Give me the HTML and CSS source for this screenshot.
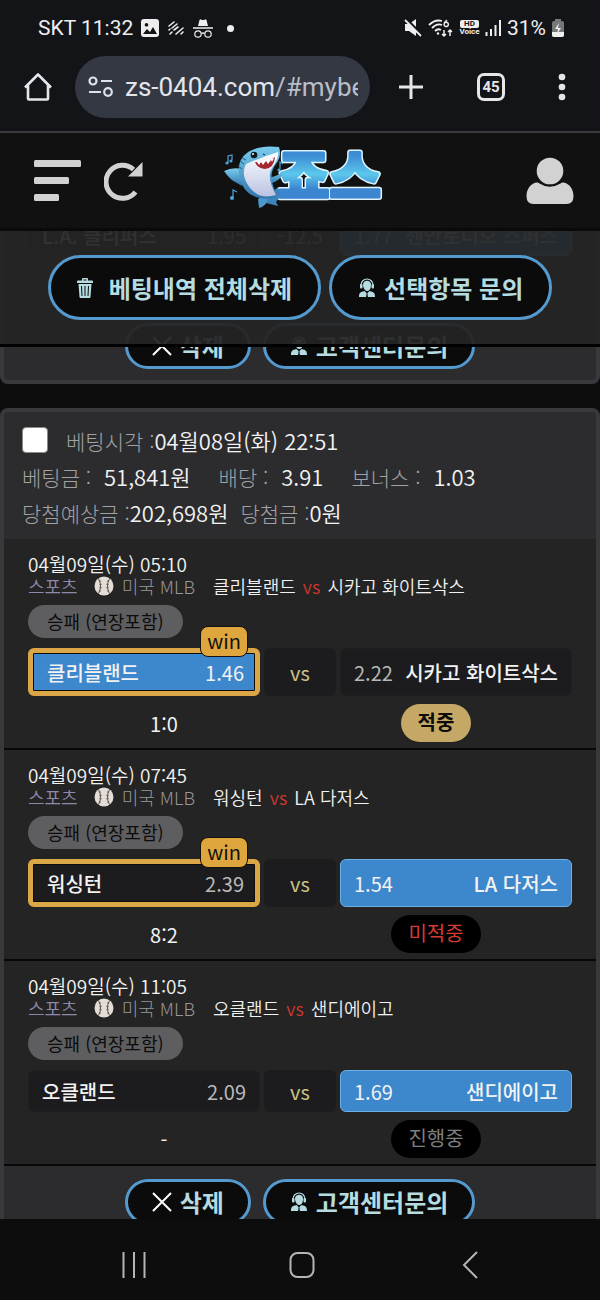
FILE: index.html
```
<!DOCTYPE html>
<html lang="ko">
<head>
    <meta charset="UTF-8">
    <meta name="viewport" content="width=device-width, initial-scale=1.0">
    <title>죠스 - 베팅내역</title>
    <link rel="stylesheet" href="styles.css">
</head>
<body>
    <!-- shared icons -->
    <svg class="sprite" aria-hidden="true">
        <symbol id="ball" viewBox="0 0 20 20">
            <circle cx="10" cy="10" r="9.5" fill="#e4ddd6"/>
            <path d="M4.500 2.500Q8.500 10 4.500 17.500M15.500 2.500Q11.500 10 15.500 17.500" fill="none" stroke="#55504c" stroke-width="1"/>
            <path d="M5 5.500l2-.7M5.500 8.500l2.300-.3M5.500 11.500l2.300.3M5 14.500l2 .7M15 5.500l-2-.7M14.500 8.500l-2.300-.3M14.500 11.500l-2.300.3M15 14.500l-2 .7" stroke="#55504c" stroke-width=".8"/>
        </symbol>
        <symbol id="agent" viewBox="0 0 18 20">
            <path d="M3 8V7a6 6 0 0 1 12 0v1" fill="none" stroke="currentColor" stroke-width="1.200"/>
            <rect x="2" y="6" width="2.500" height="4.500" rx="1" fill="currentColor"/>
            <rect x="13.500" y="6" width="2.500" height="4.500" rx="1" fill="currentColor"/>
            <path d="M5 6.500C5 1.500 13 1.500 13 6.500S11 13 9 13 5 10 5 6.500z" fill="currentColor"/>
            <path d="M1 19c0-4 1-5 5.500-6L9 15.500l2.500-2.500C16 14 17 15 17 19z" fill="currentColor"/>
            <path d="M8.200 15.500h1.600l-.3 1.200.5 2.300H8l.5-2.300z" fill="#0b0b0b"/>
        </symbol>
        <symbol id="cross" viewBox="0 0 20 20">
            <path d="M1 1l18 18M19 1L1 19" fill="none" stroke="#fff" stroke-width="2"/>
        </symbol>
    </svg>

    <div class="status-bar">
        <div class="status-left">
            <span class="status-text">SKT 11:32</span>
            <svg width="18" height="18" viewBox="0 0 18 18"><path fill-rule="evenodd" d="M3 0h12a3 3 0 0 1 3 3v12a3 3 0 0 1-3 3H3a3 3 0 0 1-3-3V3a3 3 0 0 1 3-3zM2 15l4-5 3 3 3-5 4 7zM5.500 4a1.800 1.800 0 1 0 .01 0z" fill="#eee"/></svg>
            <svg width="18" height="16" viewBox="0 0 18 16" stroke="#eee" stroke-width="1.600" fill="none" stroke-linecap="round"><path d="M2 6l5-4M2 10l1-1M5 8l5-4M3 14l2-2M7 10l4-3M9 14l7-6M14 14l2-2"/></svg>
            <svg width="20" height="19" viewBox="0 0 20 19"><path d="M5 7l1.500-6Q7 0 8 .5q2 1 4 0 1-.5 1.500.5L15 7z" fill="#eee"/><path d="M0 9h20M8.500 14.500q1.500-1 3 0" stroke="#eee" stroke-width="1.300" fill="none"/><circle cx="5" cy="15" r="3.200" fill="none" stroke="#eee" stroke-width="1.200"/><circle cx="15" cy="15" r="3.200" fill="none" stroke="#eee" stroke-width="1.200"/></svg>
            <span class="dot"></span>
        </div>
        <div class="status-right">
            <svg width="18" height="18" viewBox="0 0 18 18"><path d="M1 5h4l7-5v17l-7-5H1z" fill="#eee"/><path d="M2 0l17 17" stroke="#131418" stroke-width="3"/><path d="M1 1l16 16" stroke="#eee" stroke-width="1.800"/></svg>
            <svg width="26" height="19" viewBox="0 0 26 19" fill="none" stroke="#eee" stroke-width="1.800"><path d="M1 6Q7 0 14 2M4 9q5-5 10-3M7 12q3-3 6-1"/><circle cx="10" cy="14.500" r="1.200" fill="#eee" stroke="none"/><path d="M19 1q-3 2-3 4.500a2.200 2.200 0 1 0 .5-1.500" stroke-width="1.500"/><path d="M16 11v6m-2-2l2 2 2-2M22 17v-6m-2 2l2-2 2 2" stroke-width="1.500"/></svg>
            <span class="volte"><b>HD</b><i>Voice</i></span>
            <svg width="16" height="16" viewBox="0 0 16 16" stroke="#eee" stroke-width="2"><path d="M1.500 16v-4M6 16V9M10.500 16V5M15 16V0"/></svg>
            <span class="status-text">31%</span>
            <svg width="12" height="18" viewBox="0 0 12 18"><path d="M3 0h6v2h1a2 2 0 0 1 2 2v12a2 2 0 0 1-2 2H2a2 2 0 0 1-2-2V4a2 2 0 0 1 2-2h1z" fill="#77777a"/><path d="M0 13h12v3a2 2 0 0 1-2 2H2a2 2 0 0 1-2-2z" fill="#eee"/><path d="M7 4L3 10h3l-1 5 4-6H6z" fill="#eee"/></svg>
        </div>
    </div>

    <div class="browser-bar">
        <button class="icon-btn" aria-label="홈"><svg width="30" height="30" viewBox="0 0 30 30" fill="none" stroke="#e6e6ea" stroke-width="2.600" stroke-linejoin="round"><path d="M2 15.500L15 2.500l13 13M5 13v13.500q0 1 1 1h18q1 0 1-1V13"/></svg></button>
        <div class="address">
            <svg width="25" height="22" viewBox="0 0 25 22" fill="none" stroke="#dfe1e8" stroke-width="2.200"><circle cx="5" cy="5" r="3.500"/><path d="M13 5h11M1 16h12"/><circle cx="20" cy="16" r="3.800"/></svg>
            <span class="url">zs-0404.com<span>/#mybet</span></span>
        </div>
        <div class="browser-actions">
            <button class="icon-btn" aria-label="새 탭"><svg width="26" height="26" viewBox="0 0 26 26" stroke="#e6e6ea" stroke-width="3"><path d="M13 1v24M1 13h24"/></svg></button>
            <button class="icon-btn tabs" aria-label="탭 45개">45</button>
            <button class="icon-btn" aria-label="메뉴"><svg width="8" height="28" viewBox="0 0 8 28" fill="#e6e6ea"><circle cx="4" cy="4" r="3.300"/><circle cx="4" cy="14" r="3.300"/><circle cx="4" cy="24" r="3.300"/></svg></button>
        </div>
    </div>

    <header class="site-header">
        <div class="header-left">
            <button class="icon-btn" aria-label="전체 메뉴"><svg width="47" height="42" viewBox="0 0 47 42" fill="#d2d2d2"><rect width="47" height="7" rx="1.500"/><rect y="17" width="35" height="7" rx="1.500"/><rect y="34" width="25" height="7" rx="1.500"/></svg></button>
            <button class="icon-btn" aria-label="새로고침"><svg width="40" height="40" viewBox="0 0 40 40"><path d="M29.500 8.500A16.500 16.500 0 1 0 31.500 31" fill="none" stroke="#d2d2d2" stroke-width="5"/><path d="M38.500 1v14.500H24z" fill="#d2d2d2"/></svg></button>
        </div>
        <a href="#" class="logo" aria-label="죠스">
            <svg width="160" height="66" viewBox="0 0 160 66">
                <defs>
                    <linearGradient id="word" x1="0" y1="0" x2="0" y2="1">
                        <stop offset="0" stop-color="#2f74c4"/>
                        <stop offset=".3" stop-color="#3f8fd6"/>
                        <stop offset=".52" stop-color="#5cc8ec"/>
                        <stop offset=".7" stop-color="#3c86d0"/>
                        <stop offset="1" stop-color="#3f83d2"/>
                    </linearGradient>
                    <linearGradient id="skin" x1="0" y1="0" x2="0" y2="1">
                        <stop offset="0" stop-color="#79cdee"/>
                        <stop offset="1" stop-color="#2f76ad"/>
                    </linearGradient>
                    <linearGradient id="belly" x1="0" y1="0" x2="0" y2="1">
                        <stop offset="0" stop-color="#fff"/>
                        <stop offset="1" stop-color="#b9c2e2"/>
                    </linearGradient>
                </defs>
                <text x="54" y="52" class="word-edge">죠스</text>
                <text x="54" y="52" class="word-fill" fill="url(#word)" stroke="url(#word)">죠스</text>
                <!-- shark -->
                <path d="M0 26q8-4 18-2l4 12q-3 1-4 5l-5-3q-7-3-13-12z" fill="url(#skin)"/>
                <path d="M43 32q10 1 17-7-2 11-15 14z" fill="url(#skin)"/>
                <path d="M45 50l9-8q4 10-2 15l2 4-12-3-7 5-1-9z" fill="#3c83bb"/>
                <path d="M15 23C15 8 32-1 55 2c2 6 1 12-3 17-7 9-5 18 0 29l-2 4C33 57 20 48 17 36q-3-7-2-13z" fill="url(#skin)"/>
                <path d="M22 19Q38 12 54 7q1 7-6 16-6 9 4 27-16 5-26-7-10-13-4-24z" fill="url(#belly)"/>
                <path d="M31 17q11 1 20-5-1 11-10 12-8-1-10-7z" fill="#a32631"/>
                <path d="M33 17l2 3 2-3 2 3 3-4 2 3 3-4 1 2 2-4z" fill="#fff"/>
                <circle cx="30" cy="10" r="3.300" fill="#101820"/><circle cx="29" cy="9" r="1" fill="#fff"/>
                <path d="M39 9l2 1" stroke="#101820"/>
                <path d="M14 21l4 3M16 16l4 3M18 13l4 2" stroke="#225a85" fill="none"/>
                <path d="M35 53q-1 6 1 10 7-3 8-9z" fill="#4b98ca"/>
                <g fill="none" stroke="#4ea3d8" stroke-width="1.200"><path d="M4 18v-7l4-1v5M9 52v-7l4 2M56 24v-7l3 2"/></g>
                <g fill="#4ea3d8"><circle cx="3" cy="18" r="1.600"/><circle cx="7" cy="16" r="1.600"/><circle cx="8" cy="53" r="2"/><circle cx="55" cy="25" r="1.600"/></g>
            </svg>
        </a>
        <button class="icon-btn header-user" aria-label="내 정보"><svg width="48" height="48" viewBox="0 0 48 48" fill="#d2d2d2"><circle cx="24" cy="14" r="13.300"/><path d="M10 25.500q2-.5 3.500 1 10 6.500 21 0 1.500-1.500 3.500-1C44 27 47.500 33 47.500 39q0 8-7 8h-33q-7 0-7-8C.5 33 4 27 10 25.500z"/></svg></button>
    </header>

    <main class="content">
        <div class="toolbar">
            <button class="pill-btn large">
                <svg width="16" height="20" viewBox="0 0 16 20" fill="currentColor"><path d="M5 2.500V1q0-1 1-1h4q1 0 1 1v1.500h4q1 0 1 1V5H0V3.500q0-1 1-1zM6.500 1.500v1h3v-1z" fill-rule="evenodd"/><path fill-rule="evenodd" d="M1.500 6h13l-1 13q0 1-1 1h-9q-1 0-1-1zM4 8l.5 10h1L5 8zM7.500 8v10h1V8zM11 8l-.5 10h1L12 8z"/></svg>
                <span class="wide-label">베팅내역 전체삭제</span>
            </button>
            <button class="pill-btn large"><svg width="18" height="20"><use href="#agent"/></svg><span>선택항목 문의</span></button>
        </div>

        <div class="bet-list">
            <section class="bet-card">
                <div class="match first">
                    <div class="odds short">
                        <div class="pick"><span class="team">L.A. 클리퍼스</span><span class="rate">1.95</span></div>
                        <div class="mid line">-12.5</div>
                        <div class="pick selected"><span class="rate">1.77</span><span class="team">센안토니오 스퍼스</span></div>
                    </div>
                </div>
                <div class="card-footer">
                    <button class="pill-btn"><svg width="20" height="20"><use href="#cross"/></svg><span>삭제</span></button>
                    <button class="pill-btn"><svg width="18" height="20"><use href="#agent"/></svg><span>고객센터문의</span></button>
                </div>
            </section>

            <section class="bet-card">
                <div class="card-head">
                    <div class="head-row">
                        <input type="checkbox" id="bet-1">
                        <label for="bet-1">베팅시각 :<b>04월08일(화) 22:51</b></label>
                    </div>
                    <div class="head-row spaced">
                        <span>베팅금 : <b>51,841원</b></span>
                        <span>배당 : <b>3.91</b></span>
                        <span>보너스 : <b>1.03</b></span>
                    </div>
                    <div class="head-row">
                        <span>당첨예상금 :<b>202,698원</b></span>
                        <span>당첨금 :<b>0원</b></span>
                    </div>
                </div>

                <div class="match">
                    <div class="date">04월09일(수) 05:10</div>
                    <div class="league"><a href="#">스포츠</a><svg width="20" height="20"><use href="#ball"/></svg><span class="league-name">미국 MLB</span><span class="teams">클리블랜드 <em>vs</em> 시카고 화이트삭스</span></div>
                    <div class="market">승패 (연장포함)</div>
                    <div class="odds">
                        <div class="pick selected win"><span class="badge">win</span><span class="team">클리블랜드</span><span class="rate">1.46</span></div>
                        <div class="mid">vs</div>
                        <div class="pick"><span class="rate">2.22</span><span class="team">시카고 화이트삭스</span></div>
                    </div>
                    <div class="result"><span>1:0</span><span class="state hit">적중</span></div>
                </div>

                <div class="match">
                    <div class="date">04월09일(수) 07:45</div>
                    <div class="league"><a href="#">스포츠</a><svg width="20" height="20"><use href="#ball"/></svg><span class="league-name">미국 MLB</span><span class="teams">워싱턴 <em>vs</em> LA 다저스</span></div>
                    <div class="market">승패 (연장포함)</div>
                    <div class="odds">
                        <div class="pick win"><span class="badge">win</span><span class="team">워싱턴</span><span class="rate">2.39</span></div>
                        <div class="mid">vs</div>
                        <div class="pick selected"><span class="rate">1.54</span><span class="team">LA 다저스</span></div>
                    </div>
                    <div class="result"><span>8:2</span><span class="state miss">미적중</span></div>
                </div>

                <div class="match">
                    <div class="date">04월09일(수) 11:05</div>
                    <div class="league"><a href="#">스포츠</a><svg width="20" height="20"><use href="#ball"/></svg><span class="league-name">미국 MLB</span><span class="teams">오클랜드 <em>vs</em> 샌디에이고</span></div>
                    <div class="market">승패 (연장포함)</div>
                    <div class="odds short">
                        <div class="pick"><span class="team">오클랜드</span><span class="rate">2.09</span></div>
                        <div class="mid">vs</div>
                        <div class="pick selected"><span class="rate">1.69</span><span class="team">샌디에이고</span></div>
                    </div>
                    <div class="result"><span>-</span><span class="state">진행중</span></div>
                </div>

                <div class="card-footer">
                    <button class="pill-btn"><svg width="20" height="20"><use href="#cross"/></svg><span>삭제</span></button>
                    <button class="pill-btn"><svg width="18" height="20"><use href="#agent"/></svg><span>고객센터문의</span></button>
                </div>
            </section>
        </div>
    </main>

    <nav class="system-nav">
        <button class="icon-btn" aria-label="최근 앱"><svg width="24" height="28" viewBox="0 0 24 28" stroke="#b5b5b5" stroke-width="2"><path d="M1.500 1v26M12 1v26M22.500 1v26"/></svg></button>
        <button class="icon-btn" aria-label="홈 화면"><svg width="26" height="28" viewBox="0 0 26 28" fill="none" stroke="#b5b5b5" stroke-width="2"><rect x="1.500" y="2" width="23" height="24" rx="7"/></svg></button>
        <button class="icon-btn" aria-label="뒤로"><svg width="24" height="28" viewBox="0 0 24 28" fill="none" stroke="#b5b5b5" stroke-width="2"><path d="M19 1L6 14l13 13"/></svg></button>
    </nav>
</body>
</html>
```
FILE: styles.css
```
* { box-sizing: border-box; }
body { margin: 0; height: 100vh; display: flex; flex-direction: column; overflow: hidden; background: #0d0d0d; color: #f2f2f2; font-family: "Noto Sans CJK KR", sans-serif; font-size: 20px; }
button { font-family: inherit; cursor: pointer; }
svg { display: block; flex-shrink: 0; }
.sprite { position: absolute; width: 0; height: 0; }
.icon-btn { padding: 0; border: none; background: none; color: #e6e6ea; }

/* phone status + browser */
.status-bar { display: flex; justify-content: space-between; align-items: center; height: 56px; padding: 0 36px 0 38px; background: #131418; font-family: Roboto, sans-serif; }
.status-left, .status-right { display: flex; align-items: center; }
.status-left { gap: 8px; }
.status-right { gap: 6px; }
.status-text { font-size: 21px; color: #eee; }
.dot { width: 7px; height: 7px; margin-left: 6px; border-radius: 50%; background: #eee; }
.volte { display: flex; flex-direction: column; align-items: center; width: 19px; font-size: 8px; line-height: 8px; color: #eee; }
.volte b { width: 19px; border-radius: 2px; background: #eee; color: #131418; text-align: center; }
.volte i { font-style: normal; font-weight: bold; }
.browser-bar { display: flex; align-items: center; height: 77px; padding: 0 34px 14px 23px; border-bottom: 2px solid #3b3a40; background: #131418; font-family: Roboto, sans-serif; }
.address { display: flex; align-items: center; gap: 12px; flex: 1; height: 62px; margin-left: 22px; padding: 0 12px 0 13px; border-radius: 31px; background: #333843; overflow: hidden; }
.url { flex: 1; overflow: hidden; white-space: nowrap; font-size: 26px; line-height: 32px; color: #e3e5ec; }
.url span { color: #b9bdc8; }
.browser-actions { display: flex; align-items: center; gap: 53px; margin-left: 28px; }
.tabs { width: 28px; height: 28px; border: 3px solid #e6e6ea; border-radius: 7px; font: bold 15px/22px Roboto, sans-serif; }

/* site header */
.site-header { display: grid; grid-template-columns: 1fr auto 1fr; align-items: center; height: 98px; padding: 0 26px 0 34px; border-bottom: 3px solid #0a0a0a; background: #111; }
.header-left { display: flex; align-items: center; gap: 23px; }
.header-user { justify-self: end; }
.logo { padding-bottom: 6px; }
.logo svg { overflow: visible; }
.word-edge, .word-fill { font-family: "Noto Sans CJK KR", sans-serif; font-size: 56px; font-weight: 900; stroke-linejoin: round; }
.word-edge { fill: #dff4ff; stroke: #dff4ff; stroke-width: 6px; }
.word-fill { stroke-width: 3px; }

/* bet list */
.content { position: relative; flex: 1; min-height: 0; overflow: hidden; }
.toolbar { position: absolute; top: 0; left: 0; right: 0; z-index: 2; display: flex; justify-content: center; align-items: flex-start; gap: 8px; height: 116px; padding-top: 24px; border-bottom: 3px solid #000; background: rgba(36, 36, 36, 0.94); }
.pill-btn { display: flex; align-items: center; justify-content: center; gap: 8px; height: 46px; padding: 0 24px; border: 3px solid #559ace; border-radius: 33px; background: #0b0b0b; color: #b5dce0; font-size: 24px; font-weight: bold; line-height: 34px; white-space: nowrap; }
.pill-btn.large { height: 65px; padding: 0 26px; }
.wide-label { margin-left: 8px; }
.bet-list { display: flex; flex-direction: column; gap: 24px; margin-top: -21px; }
.bet-card { border: 4px solid #38393c; border-radius: 8px; background: #2c2c2e; }
.card-head { padding: 10px 18px 9px; }
.head-row { display: flex; align-items: center; gap: 12px; height: 36px; font-size: 21px; font-weight: 300; color: #a2a2a4; white-space: pre; }
.head-row b { font-size: 22px; font-weight: 350; color: #f2f2f2; }
.head-row.spaced { gap: 28px; }
.head-row.spaced b { margin-left: 7px; }
.head-row input { appearance: none; width: 26px; height: 26px; margin: 0 6px 0 0; border: 1px solid #8a8a8a; border-radius: 4px; background: #fff; }
.match { padding: 14px 24px 6px; border-bottom: 2px solid #080808; background: #242424; }
.match.first { padding: 0 24px 52px; }
.date { font-size: 19px; font-weight: 350; line-height: 22px; }
.league { display: flex; align-items: center; font-size: 18px; font-weight: 350; line-height: 22px; white-space: nowrap; }
.league a { color: #8f88ad; text-decoration: none; }
.league svg { margin: 0 8px 0 16px; }
.league-name { font-weight: 300; color: #97979a; }
.teams { margin-left: 18px; }
.teams em { margin: 0 2px; font-style: normal; color: #cc382e; }
.market { width: fit-content; height: 33px; margin: 8px 0 10px; padding: 0 19px; border-radius: 17px; background: #5e5e60; color: #0c0c0c; font-size: 18px; line-height: 32px; }
.odds { display: grid; grid-template-columns: 1fr 72px 1fr; gap: 4px; height: 48px; }
.odds.short { height: 42px; }
.pick { position: relative; display: flex; justify-content: space-between; align-items: center; padding: 0 13px; border: 1px solid #1f1f21; border-radius: 6px; background: #1c1c1e; white-space: nowrap; }
.team { font-weight: 500; }
.rate { color: #b9b9b9; }
.mid { display: flex; align-items: center; justify-content: center; border-radius: 6px; background: #1c1c1e; color: #d0c188; }
.mid.line { color: #b9b9b9; }
.pick.selected { border-color: #6bb0e6; background: #3d87cd; }
.selected .rate { color: #f2f2f2; }
.pick.win { padding: 0 11px 0 14px; border: 5px solid #dba645; box-shadow: inset 0 0 0 1px #0c0c0c; }
.badge { position: absolute; top: -27px; right: 7px; height: 31px; padding: 0 6px; border: 1px solid #14120e; border-radius: 8px; background: #dfa63e; color: #111; line-height: 28px; }
.result { display: grid; grid-template-columns: 1fr 1fr; align-items: center; justify-items: center; height: 38px; margin-top: 8px; }
.state { height: 38px; padding: 0 17px; border-radius: 19px; background: #000; color: #7f7f80; line-height: 36px; }
.state.hit { background: #c6a866; color: #0c0c0c; font-weight: bold; }
.state.miss { color: #d23c33; }
.card-footer { display: flex; justify-content: center; gap: 12px; padding: 13px 0 11px; }

.system-nav { display: flex; justify-content: space-between; align-items: center; height: 81px; padding: 10px 118px 0 122px; background: #0d0d0d; }
```
